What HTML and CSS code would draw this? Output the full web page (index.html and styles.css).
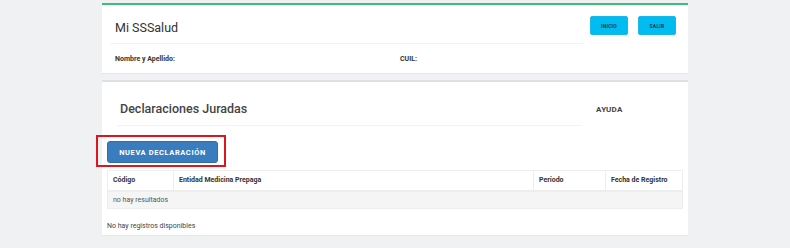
FILE: index.html
```html
<!DOCTYPE html>
<html lang="es">
<head>
<meta charset="utf-8">
<title>Mi SSSalud</title>
<link rel="stylesheet" href="styles.css">
</head>
<body>
<div class="wrap">
  <section class="card card-top">
    <div class="head">
      <div class="head-left">
        <h1 class="title">Mi SSSalud</h1>
      </div>
      <div class="head-right">
        <button class="btn-cyan">INICIO</button>
        <button class="btn-cyan">SALIR</button>
      </div>
    </div>
    <div class="info">
      <span class="info-name">Nombre y Apellido:</span>
      <span class="info-cuil">CUIL:</span>
    </div>
  </section>

  <section class="card card-main">
    <div class="head2">
      <div class="head2-left">
        <h2 class="title2">Declaraciones Juradas</h2>
      </div>
      <div class="head2-right">
        <span class="help">AYUDA</span>
      </div>
    </div>
    <div class="action">
      <button class="btn-blue">NUEVA DECLARACIÓN</button>
      <span class="highlight"></span>
    </div>
    <table class="grid">
      <thead>
        <tr>
          <th class="c1">Código</th>
          <th class="c2">Entidad Medicina Prepaga</th>
          <th class="c3">Período</th>
          <th class="c4">Fecha de Registro</th>
        </tr>
      </thead>
      <tbody>
        <tr class="empty">
          <td colspan="4">no hay resultados</td>
        </tr>
      </tbody>
    </table>
    <p class="footnote">No hay registros disponibles</p>
  </section>
</div>
</body>
</html>
```

FILE: styles.css
```css
* { box-sizing: border-box; }
html, body { margin: 0; padding: 0; }
body {
  background: #f0f1f3;
  font-family: Roboto, "Noto Sans", "Liberation Sans", sans-serif;
  color: #333;
  width: 790px;
  height: 248px;
  overflow: hidden;
}
.wrap {
  width: 586px;
  margin: 0 auto;
  padding-top: 3px;
}
.card {
  background: #fff;
}
.card-top {
  border-top: 2px solid #3dbb78;
  height: 70px;
  box-shadow: 0 1px 1px rgba(0,0,0,0.04);
}
.head {
  display: flex;
  height: 40px;
}
.head-left {
  width: 483px;
  padding-left: 8px;
}
.title {
  margin: 0;
  height: 39px;
  border-bottom: 1px solid #f3f3f3;
  padding-left: 5px;
  padding-top: 15px;
  font-size: 12.5px;
  font-weight: 400;
  line-height: 16px;
  color: #333;
}
.head-right {
  display: flex;
  gap: 10px;
  padding-top: 11px;
  padding-left: 5px;
}
.btn-cyan {
  width: 38px;
  height: 19px;
  border: 1px solid #1ab9e8;
  border-radius: 2px;
  background: #00bcf0;
  color: #1f3a48;
  font-family: Roboto, "Liberation Sans", sans-serif;
  font-size: 5px;
  font-weight: 700;
  padding: 0;
  letter-spacing: 0.2px;
}
.info {
  display: flex;
  padding-left: 13px;
  padding-top: 10px;
  font-size: 7px;
  font-weight: 700;
  color: #333;
}
.info-name { width: 285px; }

.card-main {
  margin-top: 7px;
  border-top: 2px solid #dcdfe3;
  height: 155px;
  padding: 0 5px;
  box-shadow: 0 1px 1px rgba(0,0,0,0.04);
}
.head2 {
  display: flex;
  height: 45px;
}
.head2-left {
  width: 475px;
  padding-left: 10px;
}
.title2 {
  margin: 0;
  height: 44px;
  border-bottom: 1px solid #f3f3f3;
  padding-left: 3px;
  padding-top: 19px;
  font-size: 12.5px;
  font-weight: 500;
  line-height: 16px;
  color: #444;
}
.head2-right {
  padding-left: 14px;
  padding-top: 23px;
  font-size: 8px;
  line-height: 10px;
}
.help {
  font-size: 8px;
  font-weight: 700;
  color: #444;
  letter-spacing: 0.3px;
}
.action {
  position: relative;
  height: 43px;
  padding-top: 14px;
}
.btn-blue {
  display: block;
  width: 111px;
  height: 22px;
  border: 1px solid #2f6ea8;
  border-radius: 3px;
  background: #3a7dbf;
  color: #fff;
  font-family: Roboto, "Liberation Sans", sans-serif;
  font-size: 7.5px;
  font-weight: 700;
  letter-spacing: 0.6px;
  padding: 0;
}
.highlight {
  position: absolute;
  left: -11px;
  top: 8px;
  width: 130px;
  height: 32px;
  border: 2px solid #e0141e;
  pointer-events: none;
}
.grid {
  width: 576px;
  border-collapse: collapse;
  font-size: 7px;
  color: #333;
}
.grid th {
  text-align: left;
  font-weight: 700;
  height: 20px;
  padding: 0 5px;
  border: 1px solid #eeeeee;
  border-bottom-width: 2px;
}
.grid .c1 { width: 66px; }
.grid .c3 { width: 72px; }
.grid .c4 { width: 77px; }
.grid td {
  height: 18px;
  padding: 0 5px;
  background: #f5f5f5;
  border: 1px solid #eeeeee;
  color: #555;
}
.footnote {
  margin: 0;
  padding-top: 13px;
  font-size: 7px;
  color: #444;
}
```
